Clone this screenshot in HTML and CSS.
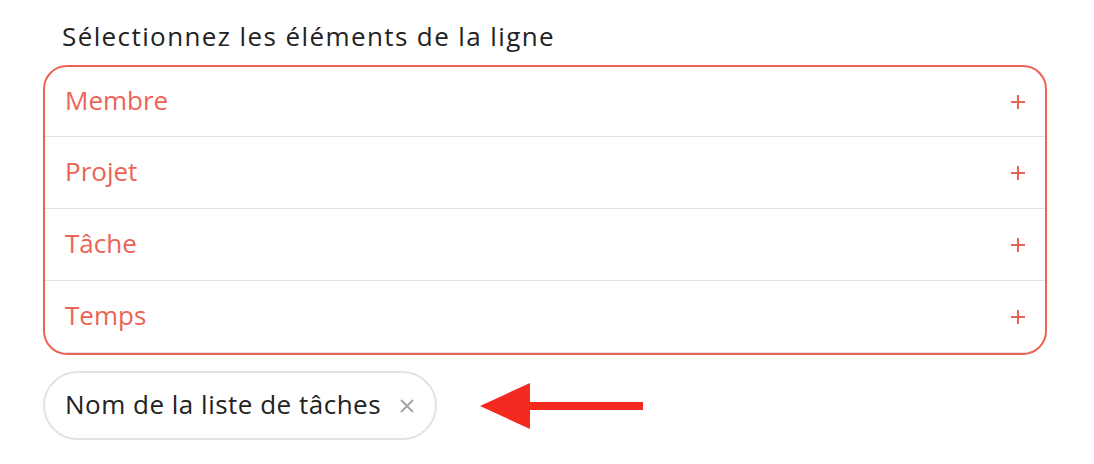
FILE: index.html
```html
<!DOCTYPE html>
<html lang="fr">
<head>
<meta charset="utf-8">
<link rel="stylesheet" href="styles.css">
</head>
<body>
<div class="page">
  <div class="title">Sélectionnez les éléments de la ligne</div>
  <div class="list">
    <div class="row"><span>Membre</span><svg class="plus" width="14" height="14" viewBox="0 0 14 14"><path d="M7 0V14M0 7H14" stroke="#eb6455" stroke-width="2"/></svg></div>
    <div class="row"><span>Projet</span><svg class="plus" width="14" height="14" viewBox="0 0 14 14"><path d="M7 0V14M0 7H14" stroke="#eb6455" stroke-width="2"/></svg></div>
    <div class="row"><span>Tâche</span><svg class="plus" width="14" height="14" viewBox="0 0 14 14"><path d="M7 0V14M0 7H14" stroke="#eb6455" stroke-width="2"/></svg></div>
    <div class="row"><span>Temps</span><svg class="plus" width="14" height="14" viewBox="0 0 14 14"><path d="M7 0V14M0 7H14" stroke="#eb6455" stroke-width="2"/></svg></div>
  </div>
  <div class="bottom">
    <div class="chip"><span class="chip-text">Nom de la liste de tâches</span><svg class="x" width="16" height="16" viewBox="0 0 16 16"><path d="M2 2L14 14M14 2L2 14" stroke="#a3a3a3" stroke-width="1.8"/></svg></div>
    <svg class="arrow" width="164" height="50" viewBox="0 0 164 50">
      <polygon points="0,25 50,2 50,21 163,21 163,29 50,29 50,48" fill="#f42a21"/>
    </svg>
  </div>
</div>
</body>
</html>
```
FILE: styles.css
```css
html, body { margin: 0; padding: 0; background: #fff; }
body { font-family: "Open Sans", "Noto Sans", sans-serif; }
.page { width: 1094px; height: 464px; padding: 18px 47px 0 43px; box-sizing: border-box; }
.title { font-size: 26px; letter-spacing: 1.4px; color: #222; padding-left: 19px; line-height: 36px; height: 47px; }
.list { border: 2px solid #eb6455; border-radius: 24px; overflow: hidden; }
.row { height: 71px; box-sizing: border-box; display: flex; align-items: center; justify-content: space-between; padding: 0 20px 4px 20px; border-bottom: 1px solid #e2e2e2; color: #eb6455; font-size: 26px; }
.row { height: 72px; }
.row:first-child { height: 70px; }
.plus { display: block; margin-top: 4px; }
.bottom { display: flex; align-items: center; margin-top: 16px; }
.chip { height: 69px; box-sizing: border-box; border: 2px solid #e3e3e3; border-radius: 35px; display: flex; align-items: center; padding: 0 20px 3px 20px; font-size: 26px; color: #222; }
.chip-text { letter-spacing: 0.5px; }
.x { display: block; margin-left: 18px; margin-top: 3px; }
.arrow { margin-left: 43px; display: block; }
```
